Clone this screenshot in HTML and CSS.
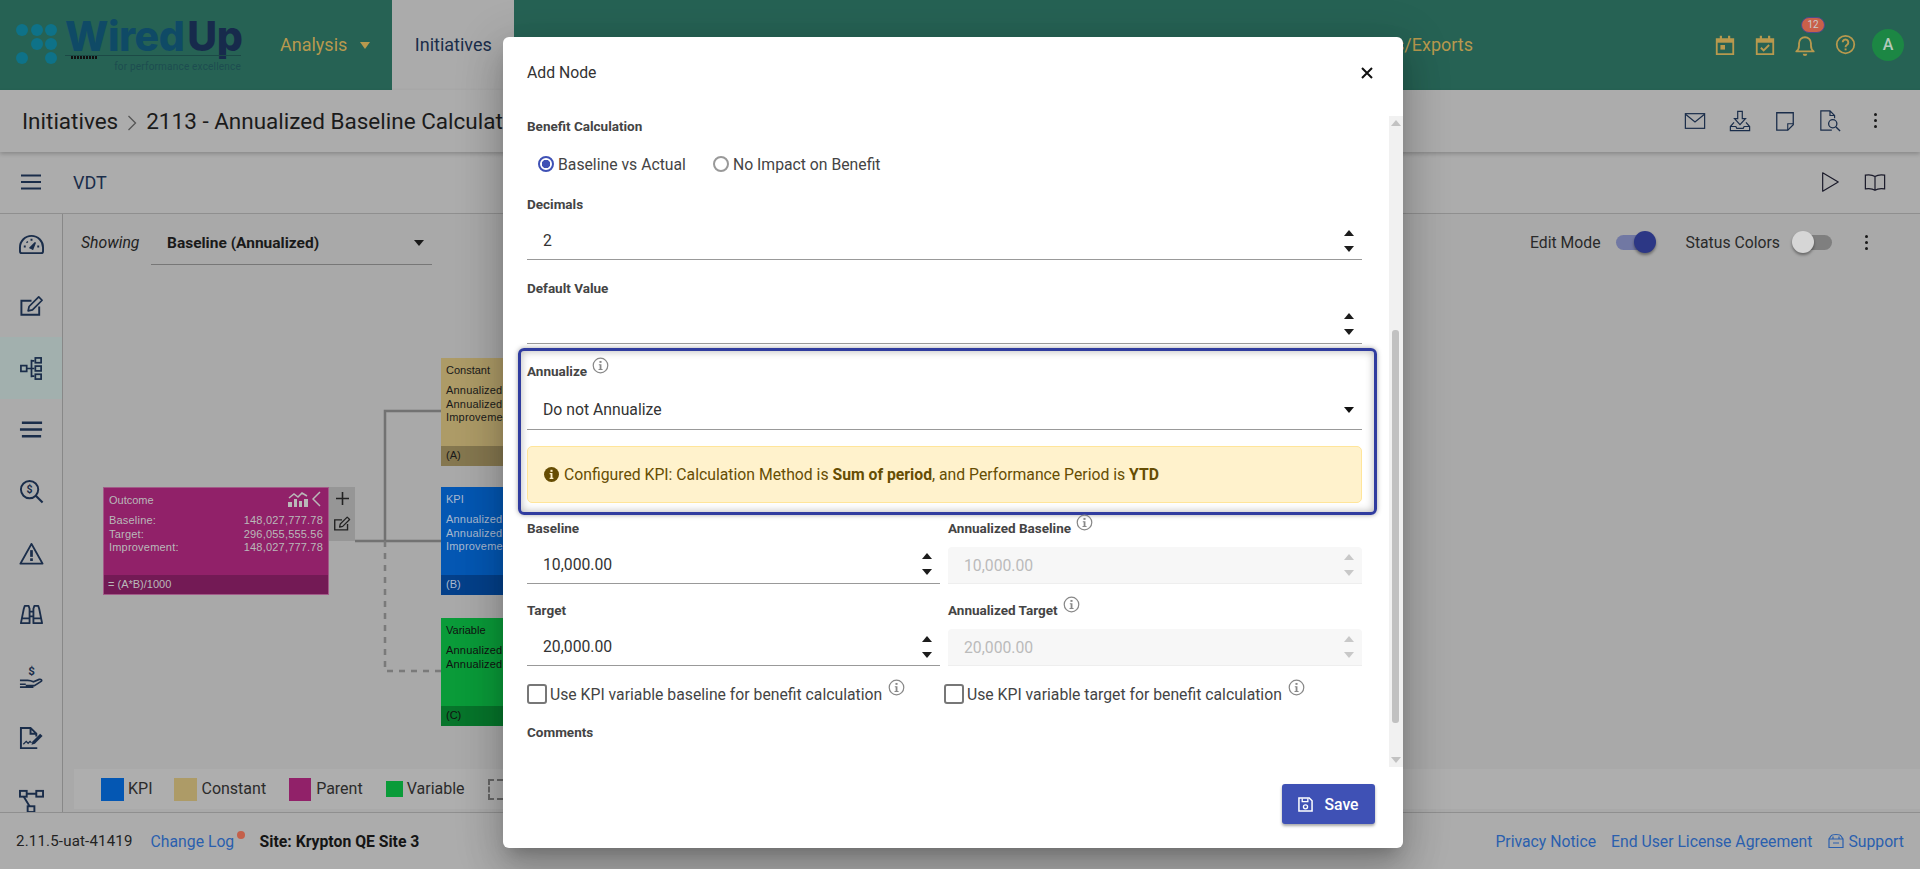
FILE: index.html
```html
<!DOCTYPE html>
<html lang="en">
<head>
<meta charset="utf-8">
<title>Add Node</title>
<link rel="stylesheet" href="styles.css">
</head>
<body>
<svg class="sprite" aria-hidden="true">
  <symbol id="i-info" viewBox="0 0 18 18"><circle cx="9" cy="9" r="7.700" fill="none" stroke="currentColor" stroke-width="1.300"/><rect x="7.900" y="4.200" width="2.200" height="2" fill="currentColor"/><path d="M7.200 7.700h2.800v5h1.200v1H6.900v-1H8.100V8.700H7.200z" fill="currentColor"/></symbol>
  <symbol id="i-edit" viewBox="0 0 26 26"><path d="M21 13v8.500H2.500V7H13" fill="none" stroke="currentColor" stroke-width="2"/><path d="M9.500 17.500l1-4.500L20.500 3l3.500 3.500L14 16.500z" fill="none" stroke="currentColor" stroke-width="1.800" stroke-linejoin="round"/></symbol>
</svg>

<div class="app">
  <header class="topbar">
    <div class="logo">
      <svg class="logo-dots" viewBox="0 0 44 42"><g fill="#0e7288"><circle cx="6" cy="7" r="6"/><circle cx="21" cy="7" r="6"/><circle cx="35" cy="7" r="6"/><circle cx="21" cy="21" r="6"/><circle cx="35" cy="21" r="6"/><circle cx="6" cy="35" r="6"/><circle cx="35" cy="35" r="6"/></g></svg>
      <div class="logo-type">
        <div class="logo-word"><span class="logo-wired">Wired</span><span class="logo-up">Up</span></div>
        <div class="logo-rule"><span class="logo-member"></span></div>
        <div class="logo-tag">for performance excellence</div>
      </div>
    </div>
    <nav class="nav">
      <div class="nav-item">Analysis<span class="nav-caret"></span></div>
      <div class="nav-tab">Initiatives</div>
      <div class="nav-item nav-exports">Imports/Exports</div>
    </nav>
    <div class="top-icons">
      <svg class="ti" viewBox="0 0 24 24"><path d="M3 5.500h18V22H3z" fill="none" stroke="currentColor" stroke-width="2"/><path d="M3 8h18" stroke="currentColor" stroke-width="3"/><path d="M7.500 2v4M16.500 2v4" stroke="currentColor" stroke-width="2.400"/><rect x="7" y="12" width="5" height="5" fill="currentColor"/></svg>
      <svg class="ti" viewBox="0 0 24 24"><path d="M3 5.500h18V22H3z" fill="none" stroke="currentColor" stroke-width="2"/><path d="M3 8h18" stroke="currentColor" stroke-width="3"/><path d="M7.500 2v4M16.500 2v4" stroke="currentColor" stroke-width="2.400"/><path d="M7.500 15l3 3 6-6" fill="none" stroke="currentColor" stroke-width="2"/></svg>
      <div class="bell">
        <svg class="ti" viewBox="0 0 24 24"><path d="M2.500 19h19c-2-1.500-3-3-3-6.500V10a6.500 6.500 0 0 0-13 0v2.500c0 3.500-1 5-3 6.500z" fill="none" stroke="currentColor" stroke-width="2" stroke-linejoin="round"/><path d="M9.500 21.500a2.500 2.500 0 0 0 5 0z" fill="currentColor"/></svg>
        <span class="badge">12</span>
      </div>
      <svg class="ti ti-help" viewBox="0 0 24 24"><circle cx="12" cy="12" r="10" fill="none" stroke="currentColor" stroke-width="2"/><path d="M8.800 9.500a3.200 3.200 0 1 1 5 2.700c-1.200.8-1.800 1.500-1.800 2.800" fill="none" stroke="currentColor" stroke-width="2.200"/><rect x="11" y="16.500" width="2.200" height="2.200" fill="currentColor"/></svg>
      <div class="avatar">A</div>
    </div>
  </header>

  <section class="crumbs">
    <div class="crumb-text">Initiatives<svg class="crumb-sep" viewBox="0 0 10 16"><path d="M1.500 1l7 7-7 7" fill="none" stroke="currentColor" stroke-width="1.300"/></svg>2113 - Annualized Baseline Calculation</div>
    <div class="crumb-icons">
      <svg class="ci" viewBox="0 0 24 24"><rect x="1.500" y="4" width="21" height="16" fill="none" stroke="currentColor" stroke-width="1.300"/><path d="M2 5l10 8 10-8" fill="none" stroke="currentColor" stroke-width="1.300"/></svg>
      <svg class="ci" viewBox="0 0 24 24"><path d="M9.500 1.500h5v8h3.500L12 16 6 9.500h3.500z" fill="none" stroke="currentColor" stroke-width="1.300"/><path d="M5.500 13.500L1.500 18v4.500h21V18l-4-4.500M1.500 18h6l1 2h7l1-2h6" fill="none" stroke="currentColor" stroke-width="1.300"/></svg>
      <svg class="ci" viewBox="0 0 24 24"><path d="M3 3h18v13l-6 6H3z" fill="none" stroke="currentColor" stroke-width="1.400"/><path d="M21 15h-6v7" fill="none" stroke="currentColor" stroke-width="1.200"/></svg>
      <svg class="ci" viewBox="0 0 24 24"><path d="M14 22H2V1h10l5 5v3M12 1v5h5" fill="none" stroke="currentColor" stroke-width="1.300"/><circle cx="15" cy="15" r="4.500" fill="none" stroke="currentColor" stroke-width="1.400"/><path d="M18.500 18.500l4.500 4.500" stroke="currentColor" stroke-width="1.500"/></svg>
      <span class="kebab kebab-crumb"><i></i><i></i><i></i></span>
    </div>
  </section>

  <section class="toolbar">
    <svg class="burger" viewBox="0 0 20 16"><path d="M0 1.500h20M0 8h20M0 14.500h20" stroke="currentColor" stroke-width="2"/></svg>
    <div class="tool-title">VDT</div>
    <div class="tool-icons">
      <svg class="tool-icon" viewBox="0 0 24 24"><path d="M4 2l17 10L4 22z" fill="none" stroke="currentColor" stroke-width="1.300" stroke-linejoin="round"/></svg>
      <svg class="tool-icon" viewBox="0 0 24 24"><path d="M12 6C9.500 4.300 5 4 1.500 4.500v15c3.500-.5 8-.2 10.500 1.500 2.500-1.700 7-2 10.500-1.500v-15C19 4 14.500 4.300 12 6zM12 6v15" fill="none" stroke="currentColor" stroke-width="1.300"/></svg>
    </div>
  </section>

  <main class="workspace">
    <aside class="side">
      <div class="side-item"><svg class="si" viewBox="0 0 26 22"><path d="M3 20h20a2 2 0 0 0 2-2v-4a12 12 0 0 0-24 0v4a2 2 0 0 0 2 2z" fill="none" stroke="currentColor" stroke-width="2"/><path d="M11 15l6-6 -3 7.500" fill="currentColor" stroke="currentColor" stroke-width="1.500"/><path d="M5 13h2M8 8l1 1M13 5v2M19 13h2" stroke="currentColor" stroke-width="2"/></svg></div>
      <div class="side-item"><svg class="si" viewBox="0 0 26 26"><use href="#i-edit"/></svg></div>
      <div class="side-item side-active"><svg class="si" viewBox="0 0 26 26"><rect x="2" y="10" width="6" height="6" fill="none" stroke="currentColor" stroke-width="1.800"/><path d="M8 13h5M13 4v18" stroke="currentColor" stroke-width="1.800"/><path d="M13 5h3M13 13h3M13 21h3" stroke="currentColor" stroke-width="1.800"/><rect x="17" y="2" width="6" height="5" fill="none" stroke="currentColor" stroke-width="1.800"/><rect x="17" y="10.500" width="6" height="5" fill="none" stroke="currentColor" stroke-width="1.800"/><rect x="17" y="19" width="6" height="5" fill="none" stroke="currentColor" stroke-width="1.800"/></svg></div>
      <div class="side-item"><svg class="si" viewBox="0 0 26 26"><path d="M3 6h21M1 13h23M3 20h20" stroke="currentColor" stroke-width="2.400"/></svg></div>
      <div class="side-item"><svg class="si" viewBox="0 0 26 26"><circle cx="11" cy="11" r="9" fill="none" stroke="currentColor" stroke-width="2"/><path d="M17.500 17.500l7 7" stroke="currentColor" stroke-width="2.200"/><text x="11" y="15" text-anchor="middle" class="si-dollar">$</text></svg></div>
      <div class="side-item"><svg class="si" viewBox="0 0 26 24"><path d="M13 2L1.500 22.500h23z" fill="none" stroke="currentColor" stroke-width="2" stroke-linejoin="round"/><path d="M13 8.500v7" stroke="currentColor" stroke-width="2.800"/><rect x="11.600" y="17" width="2.800" height="2.800" fill="currentColor"/></svg></div>
      <div class="side-item"><svg class="si" viewBox="0 0 26 26"><path d="M2 22l3-15 1-3h4l1 3v15z M15 22V7l1-3h4l1 3 3 15zM11 10h4M11 15h4M2.500 17h8M15.500 17h8" fill="none" stroke="currentColor" stroke-width="1.900" stroke-linejoin="round"/></svg></div>
      <div class="side-item"><svg class="si" viewBox="0 0 26 26"><text x="13" y="11" text-anchor="middle" class="si-dollar2">$</text><path d="M1 17h8c3 0 4 .5 6 1.500l6-2.500c2-.5 3.500 1 2 2l-7 4.500H7 M1 21h6 M1 24h14" fill="none" stroke="currentColor" stroke-width="1.700"/></svg></div>
      <div class="side-item"><svg class="si" viewBox="0 0 26 26"><path d="M19 23H2V2h10l6 6v3M12 2v6h6" fill="none" stroke="currentColor" stroke-width="2"/><path d="M4.500 19l3-3 2 2 2-2 1.500 1.500" fill="none" stroke="currentColor" stroke-width="1.300"/><path d="M14 16l8-8 2.500 2.500-8 8-3.500 1z" fill="currentColor"/></svg></div>
      <div class="side-item"><svg class="si" viewBox="0 0 26 26"><rect x="1" y="3" width="7" height="6" fill="none" stroke="currentColor" stroke-width="2"/><rect x="18" y="3" width="7" height="6" fill="none" stroke="currentColor" stroke-width="2"/><rect x="9" y="19" width="7" height="6" fill="none" stroke="currentColor" stroke-width="2"/><path d="M8 6h10M5 9l6 10" stroke="currentColor" stroke-width="2"/></svg></div>
    </aside>

    <div class="canvas">
      <div class="controls">
        <span class="show-label">Showing</span>
        <div class="show-select">Baseline (Annualized)<span class="caret caret-dark"></span></div>
        <div class="controls-right">
          <span class="ctrl-text">Edit Mode</span>
          <span class="toggle toggle-on"><i></i></span>
          <span class="ctrl-text ctrl-status">Status Colors</span>
          <span class="toggle toggle-off"><i></i></span>
          <span class="kebab kebab-ctrl"><i></i><i></i><i></i></span>
        </div>
      </div>

      <div class="diagram">
        <svg class="wires" viewBox="0 0 500 500">
          <path d="M292 271H378M322 271V141H378" fill="none" stroke="#727272" stroke-width="2.500"/>
          <path d="M322 271V401H378" fill="none" stroke="#7a7a7a" stroke-width="2.500" stroke-dasharray="6 6"/>
        </svg>

        <div class="node node-parent">
          <div class="node-body">
            <div class="node-head">Outcome
              <span class="node-tools">
                <svg class="chart" viewBox="0 0 20 16"><path d="M1 7l5-4 4 3 4-4 5 3" fill="none" stroke="currentColor" stroke-width="1.500"/><path d="M0 16V11h4v5zM6 16V8h3v8zM11 16v-6h3v6zM16 16V8h4v8z" fill="currentColor"/></svg>
                <svg class="chev" viewBox="0 0 9 16"><path d="M8 1L1 8l7 7" fill="none" stroke="currentColor" stroke-width="1.500"/></svg>
              </span>
            </div>
            <div class="node-row"><span>Baseline:</span><span>148,027,777.78</span></div>
            <div class="node-row"><span>Target:</span><span>296,055,555.56</span></div>
            <div class="node-row"><span>Improvement:</span><span>148,027,777.78</span></div>
          </div>
          <div class="node-foot">= (A*B)/1000</div>
        </div>
        <div class="node-strip">
          <svg class="strip-plus" viewBox="0 0 14 14"><path d="M7 0v14M0 7h14" stroke="currentColor" stroke-width="1.700"/></svg>
          <svg class="strip-edit" viewBox="0 0 26 26"><use href="#i-edit"/></svg>
        </div>

        <div class="node node-constant">
          <div class="node-body">
            <div class="node-head">Constant</div>
            <div class="node-row"><span>Annualized</span></div>
            <div class="node-row"><span>Annualized</span></div>
            <div class="node-row"><span>Improvement</span></div>
          </div>
          <div class="node-foot">(A)</div>
        </div>
        <div class="node node-kpi">
          <div class="node-body">
            <div class="node-head">KPI</div>
            <div class="node-row"><span>Annualized</span></div>
            <div class="node-row"><span>Annualized</span></div>
            <div class="node-row"><span>Improvement</span></div>
          </div>
          <div class="node-foot">(B)</div>
        </div>
        <div class="node node-variable">
          <div class="node-body">
            <div class="node-head">Variable</div>
            <div class="node-row"><span>Annualized</span></div>
            <div class="node-row"><span>Annualized</span></div>
          </div>
          <div class="node-foot">(C)</div>
        </div>
      </div>

      <div class="legend">
        <span class="swatch sw-kpi"></span><span class="leg-text">KPI</span>
        <span class="swatch sw-constant"></span><span class="leg-text">Constant</span>
        <span class="swatch sw-parent"></span><span class="leg-text">Parent</span>
        <span class="swatch sw-variable"></span><span class="leg-text">Variable</span>
        <span class="swatch sw-dashed"></span>
      </div>
    </div>
  </main>

  <footer class="foot">
    <span class="version">2.11.5-uat-41419</span>
    <span class="foot-link change-log">Change Log<i class="log-dot"></i></span>
    <span class="site">Site: Krypton QE Site 3</span>
    <div class="foot-right">
      <span class="foot-link">Privacy Notice</span>
      <span class="foot-link">End User License Agreement</span>
      <span class="foot-link foot-support"><svg class="support-icon" viewBox="0 0 18 16"><path d="M2 6h14v8.500H2zM2 6l2-3M16 6l-2-3M4 3c1-2 9-2 10 0M6 6V3.500M12 6V3.500M6 10h6" fill="none" stroke="currentColor" stroke-width="1.200"/></svg>Support</span>
    </div>
  </footer>
</div>

<div class="modal" role="dialog" aria-label="Add Node">
  <div class="modal-head">
    <span class="modal-title">Add Node</span>
    <svg class="modal-close" viewBox="0 0 12 12"><path d="M1 1l10 10M11 1L1 11" stroke="currentColor" stroke-width="2"/></svg>
  </div>
  <div class="modal-body">
    <div class="form">
      <div class="lbl">Benefit Calculation</div>
      <div class="radios">
        <span class="radio radio-on"></span><span class="radio-text">Baseline vs Actual</span>
        <span class="radio radio-off"></span><span class="radio-text">No Impact on Benefit</span>
      </div>
      <div class="lbl lbl-decimals">Decimals</div>
      <div class="field field-decimals">2<span class="spin"><i class="up"></i><i class="down"></i></span></div>
      <div class="lbl lbl-default">Default Value</div>
      <div class="field field-tall"><span class="spin"><i class="up"></i><i class="down"></i></span></div>

      <div class="focus-box">
        <div class="lbl">Annualize<svg class="info info-annualize"><use href="#i-info"/></svg></div>
        <div class="field field-select">Do not Annualize<span class="caret caret-black"></span></div>
        <div class="alert">
          <svg class="alert-icon" viewBox="0 0 16 16"><circle cx="8" cy="8" r="8" fill="currentColor"/><rect x="6.900" y="3" width="2.200" height="2.200" fill="#fff2cc"/><path d="M6 6.500h3v5h1v1.300H6v-1.300h1V7.800H6z" fill="#fff2cc"/></svg>
          <span>Configured KPI: Calculation Method is <b>Sum of period</b>, and Performance Period is <b>YTD</b></span>
        </div>
      </div>

      <div class="grid grid-baseline">
        <div>
          <div class="lbl">Baseline</div>
          <div class="field field-num">10,000.00<span class="spin"><i class="up"></i><i class="down"></i></span></div>
        </div>
        <div>
          <div class="lbl">Annualized Baseline<svg class="info"><use href="#i-info"/></svg></div>
          <div class="field field-num field-disabled">10,000.00<span class="spin"><i class="up"></i><i class="down"></i></span></div>
        </div>
      </div>
      <div class="grid grid-target">
        <div>
          <div class="lbl">Target</div>
          <div class="field field-num">20,000.00<span class="spin"><i class="up"></i><i class="down"></i></span></div>
        </div>
        <div>
          <div class="lbl">Annualized Target<svg class="info"><use href="#i-info"/></svg></div>
          <div class="field field-num field-disabled">20,000.00<span class="spin"><i class="up"></i><i class="down"></i></span></div>
        </div>
      </div>
      <div class="grid grid-checks">
        <div class="check"><span class="box"></span>Use KPI variable baseline for benefit calculation<svg class="info info-check"><use href="#i-info"/></svg></div>
        <div class="check check-right"><span class="box"></span>Use KPI variable target for benefit calculation<svg class="info info-check"><use href="#i-info"/></svg></div>
      </div>
      <div class="lbl lbl-comments">Comments</div>
    </div>
    <div class="scroll">
      <span class="scroll-up"></span>
      <span class="scroll-thumb"></span>
      <span class="scroll-down"></span>
    </div>
  </div>
  <div class="modal-foot">
    <div class="save">
      <svg class="save-icon" viewBox="0 0 16 16"><path d="M1 1h11l3 3v11H1z" fill="none" stroke="currentColor" stroke-width="1.600"/><path d="M4.500 1.500v3.500h6V1.500" fill="none" stroke="currentColor" stroke-width="1.400"/><circle cx="8" cy="10.500" r="2.200" fill="none" stroke="currentColor" stroke-width="1.400"/></svg>
      Save
    </div>
  </div>
</div>
</body>
</html>
```
FILE: styles.css
```css
* { box-sizing: border-box; }
html, body { margin: 0; height: 100%; }
body { font-family: Roboto, "Liberation Sans", sans-serif; background: #a9a9a9; color: #222; overflow: hidden; }
.sprite { display: none; }
.app { height: 869px; display: flex; flex-direction: column; overflow: hidden; }

/* top bar */
.topbar { height: 90px; flex: none; background: #266254; display: flex; color: #b8994e; }
.logo { width: 280px; flex: none; display: flex; padding: 23px 0 0 16px; }
.logo-dots { width: 44px; height: 42px; flex: none; }
.logo-type { margin: -6px 0 0 5px; width: 176px; display: flex; flex-direction: column; }
.logo-word { font-family: Inter, sans-serif; font-weight: 800; font-size: 41px; line-height: 38px; letter-spacing: -.5px; white-space: nowrap; height: 38px; }
.logo-wired { color: #0f4a66; }
.logo-up { color: #172a4c; margin-left: 3px; }
.logo-rule { border-top: 1px solid #1c4a46; height: 7px; }
.logo-member { display: block; width: 26px; height: 3px; margin-left: 6px; background: repeating-linear-gradient(90deg, #111 0 2px, transparent 2px 3px); }
.logo-tag { margin-top: -1px; font-size: 10px; line-height: 12px; color: #1d4d50; text-align: right; letter-spacing: .2px; white-space: nowrap; }
.nav { flex: 1; display: flex; font-size: 18px; line-height: 90px; }
.nav-item { white-space: nowrap; }
.nav-caret { display: inline-block; margin: 0 22px 2px 13px; border: 5px solid transparent; border-top: 7px solid #b8994e; border-bottom: 0; width: 0; height: 0; vertical-align: middle; }
.nav-tab { width: 122px; background: #ababab; color: #1a2d4a; text-align: center; }
.nav-exports { margin-left: auto; margin-right: 237px; }
.top-icons { width: 210px; flex: none; position: relative; display: flex; align-items: center; padding: 0 0 1px 4px; }
.ti { width: 22px; height: 22px; flex: none; margin-right: 18px; display: block; }
.ti-help { margin-right: 0; width: 21px; height: 21px; }
.bell { position: relative; width: 41px; flex: none; }
.badge { position: absolute; left: 7px; top: -17px; width: 24px; height: 16px; border-radius: 8px; background: #c9604a; color: #ccc; border: 1px solid #4e4a8c; font-size: 10px; line-height: 14px; text-align: center; }
.avatar { width: 32px; height: 32px; border-radius: 50%; background: #1c8744; color: #b5c9bb; margin-left: 16px; font-size: 16px; font-weight: 500; line-height: 32px; text-align: center; }

/* breadcrumb */
.crumbs { height: 62px; flex: none; background: #acacac; display: flex; align-items: center; padding: 0 0 1px 22px; box-shadow: 0 2px 4px rgba(0,0,0,.2); position: relative; z-index: 1; }
.crumb-text { font-size: 22.500px; color: #1b1b1b; white-space: nowrap; flex: none; }
.crumb-sep { width: 10px; height: 16px; margin: 0 9px 0 9px; color: #555; vertical-align: -2px; }
.crumb-icons { margin-left: auto; display: flex; align-items: center; width: 236px; flex: none; color: #1a2d4a; }
.ci { width: 22px; height: 22px; margin-right: 23px; flex: none; }
.kebab { display: inline-flex; flex-direction: column; gap: 3px; width: 3px; }
.kebab i { display: block; width: 3px; height: 3px; background: #1a1a1a; border-radius: 50%; }
.kebab-crumb { margin-left: 10px; }

/* toolbar */
.toolbar { height: 62px; flex: none; background: #acacac; border-bottom: 1px solid #8f8f8f; display: flex; align-items: center; padding: 0 34px 2px 21px; color: #1a2d4a; }
.burger { width: 20px; height: 16px; }
.tool-title { margin-left: 32px; margin-top: 2px; font-size: 18px; flex: 1; }
.tool-icons { display: flex; gap: 23px; color: #1a1a2a; }
.tool-icon { width: 22px; height: 22px; }

/* workspace */
.workspace { flex: 1; min-height: 0; display: flex; }
.side { width: 63px; flex: none; border-right: 1px solid #888; background: #ababab; overflow: hidden; color: #1a2d4a; }
.side-item { height: 61.700px; display: flex; align-items: center; justify-content: center; }
.si { width: 25px; height: 25px; }
.si-dollar { font-size: 11px; font-weight: 700; fill: currentColor; }
.si-dollar2 { font-size: 12px; font-weight: 700; fill: currentColor; }
.side-active { background: #a2b0ae; }
.canvas { flex: 1; min-width: 0; display: flex; flex-direction: column; position: relative; }
.controls { height: 56px; flex: none; display: flex; align-items: center; padding: 0 0 0 18px; font-size: 15.750px; }
.show-label { font-style: italic; color: #222; width: 70px; flex: none; }
.show-select { width: 281px; height: 47px; border-bottom: 1px solid #777; display: flex; align-items: center; justify-content: space-between; padding: 3px 8px 0 16px; font-size: 15.500px; font-weight: 700; color: #1a1a1a; margin-top: -1px; }
.caret { width: 0; height: 0; border-left: 5px solid transparent; border-right: 5px solid transparent; }
.caret-dark { border-top: 6px solid #1a1a1a; }
.caret-black { border-top: 6px solid #111; }
.controls-right { margin-left: auto; display: flex; align-items: center; color: #2a2a2a; }
.ctrl-text { white-space: nowrap; }
.ctrl-status { margin-left: 29px; }
.toggle { position: relative; display: block; width: 36px; height: 15px; border-radius: 8px; }
.toggle i { position: absolute; top: -4px; width: 22px; height: 22px; border-radius: 50%; box-shadow: 0 2px 3px rgba(0,0,0,.4); }
.toggle-on { background: #7178a3; margin-left: 15px; margin-right: 5px; }
.toggle-on i { left: 18px; background: #2c3785; }
.toggle-off { background: #7f7f7f; margin-left: 16px; }
.toggle-off i { left: -4px; background: #d6d6d6; }
.kebab-ctrl { margin: 0 52px 0 33px; }
.diagram { flex: 1; min-height: 0; position: relative; }
.wires { position: absolute; left: 0; top: 0; width: 500px; height: 500px; }
.node { position: absolute; width: 226px; height: 108px; display: flex; flex-direction: column; font-family: "Liberation Sans", Arial, sans-serif; font-size: 11px; overflow: hidden; }
.node-body { flex: 1; padding: 3px 5px 0 5px; }
.node-head { height: 20px; line-height: 18px; margin-bottom: 3px; display: flex; justify-content: space-between; }
.node-row { display: flex; justify-content: space-between; line-height: 13.500px; white-space: nowrap; letter-spacing: .2px; }
.node-foot { height: 20px; flex: none; line-height: 19px; padding-left: 5px; }
.node-tools { display: flex; gap: 4px; align-items: flex-start; }
.chart { width: 20px; height: 16px; }
.chev { width: 9px; height: 16px; margin-right: 2px; }
.node-parent { left: 40px; top: 217px; background: #912169; border: 1px solid #a25a88; color: #b9b9b9; }
.node-parent .node-foot { background: #731a55; margin: 0 -1px -1px; }
.node-constant { left: 378px; top: 88px; background: #ad9b67; color: #1a1a1a; }
.node-constant .node-foot { background: #85774f; }
.node-kpi { left: 378px; top: 217px; background: #0457b3; color: #a9b9cf; }
.node-kpi .node-foot { background: #04408a; }
.node-variable { left: 378px; top: 348px; background: #0a9b39; color: #111; }
.node-variable .node-foot { background: #07752b; }
.node-strip { position: absolute; left: 266px; top: 217px; width: 26px; height: 54px; background: #969696; display: flex; flex-direction: column; align-items: center; padding-top: 5px; color: #222; }
.strip-plus { width: 13px; height: 13px; }
.strip-edit { width: 18px; height: 18px; margin-top: 10px; }
.legend { height: 40px; flex: none; margin: 0 0 3px 11px; background: #aeaeae; display: flex; align-items: center; padding-left: 27px; font-size: 16px; color: #2b2b2b; line-height: 38px; }
.swatch { flex: none; display: block; width: 23px; height: 23px; }
.leg-text { margin: 0 22px 0 4px; }
.sw-kpi { background: #0457b3; }
.sw-constant { background: #ad9b67; }
.sw-parent { background: #912169; width: 22px; margin: 0 1px 0 1px; }
.sw-variable { background: #0a9b39; width: 17px; height: 16px; margin-left: 1px; }
.sw-dashed { border: 2px dashed #666; width: 24px; height: 21px; margin-left: 1px; }

/* footer */
.foot { height: 57px; flex: none; background: #acacac; border-top: 1px solid #8f8f8f; display: flex; align-items: center; padding: 0 16px; font-size: 15.750px; position: relative; }
.version { color: #222; font-size: 15px; letter-spacing: .2px; }
.foot-link { color: #2a5fae; white-space: nowrap; }
.change-log { margin-left: 18px; position: relative; width: 83px; }
.log-dot { position: absolute; left: 86px; top: -1px; width: 8px; height: 8px; border-radius: 50%; background: #c4604a; }
.site { margin-left: 26px; font-weight: 700; color: #151515; }
.foot-right { margin-left: auto; display: flex; gap: 15px; }
.foot-support { display: flex; align-items: center; }
.support-icon { width: 18px; height: 16px; margin-right: 3px; }

/* modal */
.modal { position: absolute; left: 503px; top: 37px; width: 900px; height: 811px; background: #fff; border-radius: 6px; display: flex; flex-direction: column; z-index: 10; box-shadow: 0 11px 15px -7px rgba(0,0,0,.2), 0 24px 38px 3px rgba(0,0,0,.14), 0 9px 46px 8px rgba(0,0,0,.12); }
.modal-head { height: 79px; flex: none; display: flex; justify-content: space-between; padding: 25px 30px 0 24px; }
.modal-title { font-size: 15.750px; line-height: 21px; color: #333; }
.modal-close { width: 12px; height: 12px; margin-top: 5px; color: #111; }
.modal-body { flex: 1; min-height: 0; display: flex; }
.form { flex: 1; min-width: 0; overflow: hidden; padding: 1px 27px 0 24px; position: relative; }
.lbl { font-size: 13.500px; line-height: 18px; height: 18px; font-weight: 700; color: #444; white-space: nowrap; display: flex; }
.radios { height: 30px; margin: 14px 0 0 11px; display: flex; align-items: center; font-size: 15.750px; color: #444; }
.radio { width: 16px; height: 16px; border-radius: 50%; flex: none; display: block; }
.radio-on { border: 2px solid #3f51b5; background: radial-gradient(circle, #3f51b5 0 4px, #fff 4.500px); }
.radio-off { border: 2px solid #999; margin-left: 27px; }
.radio-text { margin-left: 4px; white-space: nowrap; }
.lbl-decimals { margin-top: 16px; }
.lbl-default { margin-top: 19px; }
.field { position: relative; height: 38px; margin-top: 8px; border-bottom: 1px solid #999; font-size: 15.750px; line-height: 38px; padding-left: 16px; color: #333; }
.field-decimals { margin-top: 9px; line-height: 38px; }
.field-tall { height: 39px; }
.spin { position: absolute; right: 8px; top: 0; bottom: 0; width: 10px; }
.spin i { position: absolute; left: 0; width: 0; height: 0; border-left: 5px solid transparent; border-right: 5px solid transparent; }
.spin .up { top: 8px; border-bottom: 6px solid #1c1c1c; }
.spin .down { top: 24px; border-top: 6px solid #1c1c1c; }
.focus-box { margin: 4px -15px 0 -9px; height: 167px; border: 3px solid #303c9f; border-radius: 6px; padding: 11px 12px 0 6px; box-shadow: 0 0 5px rgba(0,0,0,.35), inset 0 0 8px rgba(0,0,0,.3); }
.field-select { height: 39px; margin-top: 11px; line-height: 38px; }
.field-select .caret { position: absolute; right: 8px; top: 16px; }
.info { width: 17px; height: 17px; margin: -5px 0 0 5px; color: #888; flex: none; overflow: visible; }
.alert { margin-top: 16px; height: 57px; background: #fff2cc; border: 1px solid #ffe59a; border-radius: 5px; display: flex; align-items: center; padding-left: 16px; font-size: 15.750px; color: #664d03; white-space: nowrap; }
.alert-icon { width: 15px; height: 15px; margin-right: 5px; flex: none; }
.alert b { font-weight: 700; }
.grid { display: grid; grid-template-columns: 413px 414px; column-gap: 8px; }
.grid-baseline { margin-top: 4px; }
.grid-target { margin-top: 17px; }
.field-num { height: 39px; margin-top: 8px; line-height: 39px; }
.grid-target .field-num { margin-top: 9px; height: 38px; line-height: 38px; }
.field-disabled { background: #f7f7f7; color: #bbb; border-bottom: 1px solid #eee; border-radius: 4px 4px 0 0; height: 37px; margin-top: 10px; line-height: 37px; }
.grid-target .field-disabled { height: 37px; margin-top: 10px; line-height: 37px; }
.field-disabled .spin .up { border-bottom-color: #c8c8c8; top: 7px; }
.field-disabled .spin .down { border-top-color: #c8c8c8; top: 23px; }
.grid-checks { margin-top: 18px; height: 20px; }
.check { display: flex; align-items: center; font-size: 15.750px; color: #444; white-space: nowrap; }
.check-right { margin-left: -4px; }
.box { width: 20px; height: 20px; border: 2px solid #777; border-radius: 3px; flex: none; margin-right: 3px; }
.info-check { margin: -14px 0 0 6px; }
.lbl-comments { margin-top: 19px; }
.scroll { width: 14px; flex: none; background: #f1f1f1; position: relative; }
.scroll-up, .scroll-down { position: absolute; left: 2px; width: 0; height: 0; border-left: 5px solid transparent; border-right: 5px solid transparent; }
.scroll-up { top: 4px; border-bottom: 6px solid #c2c2c2; }
.scroll-down { bottom: 4px; border-top: 6px solid #c2c2c2; }
.scroll-thumb { position: absolute; left: 3px; width: 7px; top: 214px; height: 393px; background: #c1c1c1; border-radius: 3px; }
.modal-foot { height: 81px; flex: none; display: flex; justify-content: flex-end; padding: 17px 28px 0 0; }
.save { width: 93px; height: 40px; background: #3f51b5; border-radius: 3px; color: #fff; display: flex; align-items: center; justify-content: center; gap: 11px; font-size: 15.750px; font-weight: 500; box-shadow: 0 2px 3px rgba(0,0,0,.35); }
.save-icon { width: 15px; height: 15px; }
```
